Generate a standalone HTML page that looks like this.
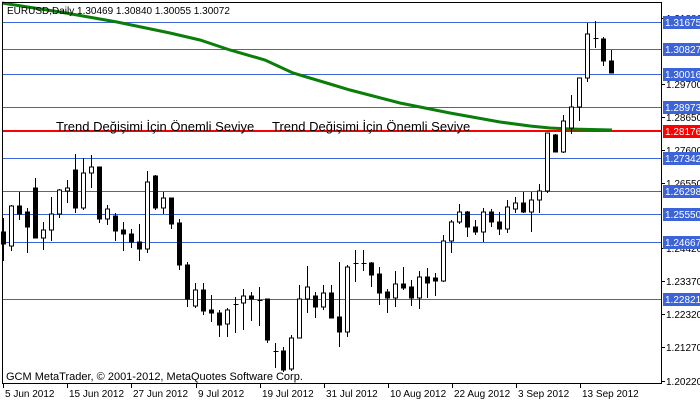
<!DOCTYPE html>
<html><head><meta charset="utf-8"><style>
body{margin:0;background:#fff;width:700px;height:402px;overflow:hidden}
svg{display:block}
text{font-family:"Liberation Sans",sans-serif;font-size:10px}
</style></head><body>
<svg id="s" width="700" height="402" xmlns="http://www.w3.org/2000/svg">
<rect x="0" y="0" width="700" height="402" fill="#fff"/>
<g id="hl" stroke="#3c64d8" stroke-width="1"></g>
<line x1="2" y1="131" x2="661" y2="131" stroke="#ff0000" stroke-width="2"/>
<polyline fill="none" stroke="#0a7d0a" stroke-width="3" points="2,3 60,12 117,22 170,33 200,40 230,50 265,60 293,73 330,84 350,90 400,103 450,113 500,122 530,126 550,128 570,129 612,130"/>
<g id="c" stroke="#000" stroke-width="1" shape-rendering="crispEdges"></g>
<rect x="2.5" y="2.5" width="659" height="381" fill="none" stroke="#000" stroke-width="1"/>
<text x="7" y="14">EURUSD,Daily  1.30469 1.30840 1.30055 1.30072</text>
<text x="56" y="131" style="font-size:13px">Trend Değişimi İçin Önemli Seviye</text>
<text x="272" y="131" style="font-size:13px">Trend Değişimi İçin Önemli Seviye</text>
<text x="6" y="380" style="font-size:11px">GCM MetaTrader, © 2001-2012, MetaQuotes Software Corp.</text>
<g id="ax"></g>
</svg>
<script>
var NS="http://www.w3.org/2000/svg";
function el(p,t,a,txt){var e=document.createElementNS(NS,t);for(var k in a)e.setAttribute(k,a[k]);if(txt)e.textContent=txt;p.appendChild(e);return e;}
var hl=document.getElementById('hl');
[22,49,74,107,158,191,214,242,299].forEach(function(y){el(hl,'line',{x1:2,y1:y+.5,x2:661,y2:y+.5});});
var d=[[232,244,218,261],[246,206,205,251],[206,214,192,220],[212,227,208,253],[188,238,178,238],[238,230,222,250],[230,214,197,241],[214,190,189,218],[191,188,180,203],[170,208,154,213],[208,173,158,210],[173,167,155,188],[167,219,167,223],[219,209,205,225],[216,231,213,241],[230,234,222,251],[234,242,229,248],[242,249,224,261],[249,182,171,253],[176,208,175,210],[208,198,192,214],[198,224,198,229],[223,265,219,270],[265,299,262,307],[306,290,283,308],[290,311,283,315],[310,313,295,322],[313,325,310,337],[324,310,308,337],[304,304,297,333],[303,296,289,330],[296,299,292,321],[300,300,287,326],[299,340,299,343],[351,351,343,368],[351,370,347,372],[369,338,335,371],[338,299,285,338],[299,287,266,313],[296,307,292,318],[307,293,285,310],[293,318,285,318],[317,332,262,347],[332,267,265,337],[263,263,250,282],[263,263,250,271],[263,275,262,287],[274,293,267,305],[292,298,289,313],[298,284,271,307],[284,288,267,290],[287,298,280,306],[298,277,271,309],[277,283,268,298],[278,281,273,296],[281,241,235,282],[241,222,220,253],[222,212,204,224],[212,227,211,237],[227,232,220,235],[232,212,208,242],[212,222,209,227],[222,229,212,235],[229,207,200,233],[209,203,197,213],[203,212,192,213],[212,200,192,232],[200,191,184,213],[191,133,133,193],[135,152,134,152],[152,121,115,153],[128,107,95,134],[107,78,78,121],[78,34,23,82],[38,38,21,48],[39,61,37,66],[61,73,50,73]];
var c=document.getElementById('c');
d.forEach(function(v,i){var x=3+8*i+.5;var o=v[0],cl=v[1],h=v[2],l=v[3];
 el(c,'line',{x1:x,y1:h,x2:x,y2:l});
 var t=Math.min(o,cl),b=Math.max(o,cl);
 if(b-t<1){el(c,'line',{x1:x-2,y1:t+.5,x2:x+3,y2:t+.5});}
 else el(c,'rect',{x:x-2,y:t,width:4,height:b-t,fill:cl<o?'#fff':'#000'});
});
var ax=document.getElementById('ax');
[[18,'1.31880'],[84,'1.29700'],[117,'1.28650'],[150,'1.27600'],[183,'1.26550'],[248,'1.24420'],[281,'1.23370'],[314,'1.22320'],[347,'1.21270'],[381,'1.20220']].forEach(function(p){
 el(ax,'line',{x1:661,y1:p[0]+.5,x2:665,y2:p[0]+.5,stroke:'#000'});
 el(ax,'text',{x:666,y:p[0]+4},p[1]);});
[[22,'1.31675','#3c64d8'],[49,'1.30827','#3c64d8'],[74,'1.30016','#3c64d8'],[107,'1.28973','#3c64d8'],[131,'1.28176','#ff0000'],[158,'1.27342','#3c64d8'],[191,'1.26298','#3c64d8'],[214,'1.25550','#3c64d8'],[242,'1.24667','#3c64d8'],[299,'1.22821','#3c64d8']].forEach(function(p){
 el(ax,'rect',{x:663,y:p[0]-6,width:37,height:13,fill:p[2]});
 el(ax,'text',{x:665,y:p[0]+4,fill:'#fff'},p[1]);});
[[3,'5 Jun 2012'],[67,'15 Jun 2012'],[131,'27 Jun 2012'],[196,'9 Jul 2012'],[260,'19 Jul 2012'],[324,'31 Jul 2012'],[388,'10 Aug 2012'],[452,'22 Aug 2012'],[516,'3 Sep 2012'],[580,'13 Sep 2012']].forEach(function(p){
 el(ax,'line',{x1:p[0]+.5,y1:384,x2:p[0]+.5,y2:388,stroke:'#000'});
 el(ax,'text',{x:p[0]+2,y:397},p[1]);});
</script>
</body></html>
